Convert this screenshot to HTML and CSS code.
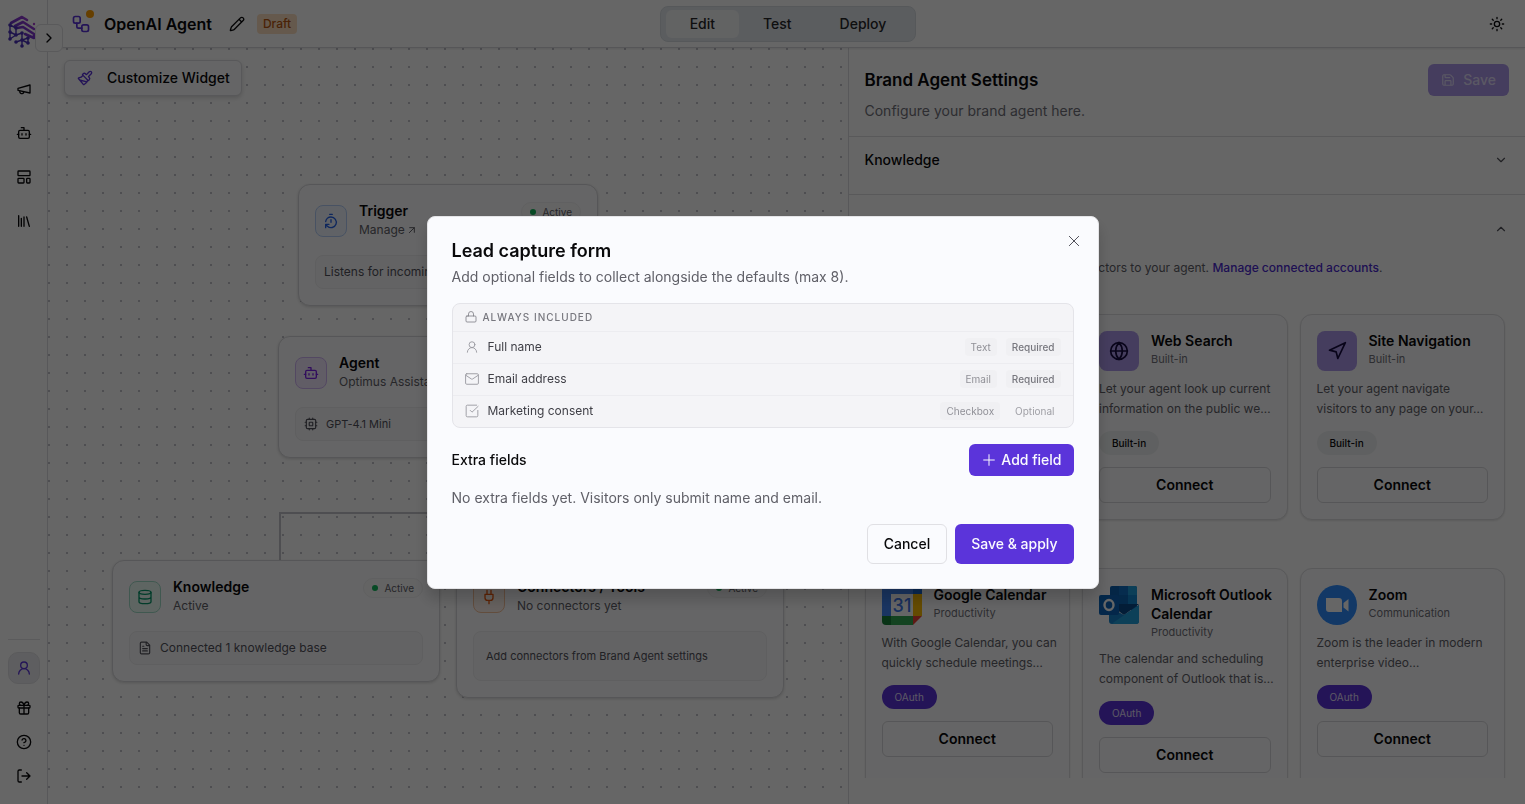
FILE: index.html
```html
<!DOCTYPE html>
<html lang="en">
<head>
<meta charset="utf-8">
<title>OpenAI Agent</title>
<link rel="stylesheet" href="styles.css">
</head>
<body>
<svg class="sprite" aria-hidden="true">
  <symbol id="i-megaphone" viewBox="0 0 24 24"><path d="m3 11 18-5v12L3 14v-3z"/><path d="M11.6 16.8a3 3 0 1 1-5.8-1.6"/></symbol>
  <symbol id="i-bot" viewBox="0 0 24 24"><path d="M12 8V4H8"/><rect width="16" height="12" x="4" y="8" rx="2"/><path d="M2 14h2M20 14h2M15 13v2M9 13v2"/></symbol>
  <symbol id="i-layout" viewBox="0 0 24 24"><rect width="18" height="7" x="3" y="3" rx="1"/><rect width="9" height="7" x="3" y="14" rx="1"/><rect width="5" height="7" x="16" y="14" rx="1"/></symbol>
  <symbol id="i-library" viewBox="0 0 24 24"><path d="m16 6 4 14M12 6v14M8 8v12M4 4v16"/></symbol>
  <symbol id="i-user" viewBox="0 0 24 24"><circle cx="12" cy="8" r="5"/><path d="M20 21a8 8 0 0 0-16 0"/></symbol>
  <symbol id="i-gift" viewBox="0 0 24 24"><rect x="3" y="8" width="18" height="4" rx="1"/><path d="M12 8v13M19 12v7a2 2 0 0 1-2 2H7a2 2 0 0 1-2-2v-7M7.5 8a2.5 2.5 0 0 1 0-5A4.8 8 0 0 1 12 8a4.8 8 0 0 1 4.500-5 2.500 2.500 0 0 1 0 5"/></symbol>
  <symbol id="i-help" viewBox="0 0 24 24"><circle cx="12" cy="12" r="10"/><path d="M9.090 9a3 3 0 0 1 5.830 1c0 2-3 3-3 3M12 17h.01"/></symbol>
  <symbol id="i-logout" viewBox="0 0 24 24"><path d="M8 21H5a2 2 0 0 1-2-2V5a2 2 0 0 1 2-2h3M16 17l5-5-5-5M21 12H9"/></symbol>
  <symbol id="i-right" viewBox="0 0 24 24"><path d="m9 18 6-6-6-6"/></symbol>
  <symbol id="i-down" viewBox="0 0 24 24"><path d="m6 9 6 6 6-6"/></symbol>
  <symbol id="i-up" viewBox="0 0 24 24"><path d="m18 15-6-6-6 6"/></symbol>
  <symbol id="i-workflow" viewBox="0 0 24 24"><rect width="8" height="8" x="3" y="3" rx="2"/><path d="M7 11v4a2 2 0 0 0 2 2h4"/><rect width="8" height="8" x="13" y="13" rx="2"/></symbol>
  <symbol id="i-pencil" viewBox="0 0 24 24"><path d="M21.174 6.812a1 1 0 0 0-3.986-3.987L3.842 16.174a2 2 0 0 0-.5.83l-1.321 4.352a.5.5 0 0 0 .623.622l4.353-1.320a2 2 0 0 0 .83-.497zM15 5l4 4"/></symbol>
  <symbol id="i-sun" viewBox="0 0 24 24"><circle cx="12" cy="12" r="4"/><path d="M12 2v2M12 20v2m-7.070-17.070 1.410 1.410m11.320 11.320 1.410 1.410M2 12h2M20 12h2M6.340 17.660l-1.410 1.410M19.070 4.930l-1.410 1.410"/></symbol>
  <symbol id="i-brush" viewBox="0 0 24 24"><path d="m14.622 17.897-10.680-2.913M18.376 2.622a1 1 0 1 1 3.002 3.002L17.360 9.643a.5.5 0 0 0 0 .707l.944.944a2.410 2.410 0 0 1 0 3.408l-.944.944a.5.5 0 0 1-.707 0L8.354 7.348a.5.5 0 0 1 0-.707l.944-.944a2.410 2.410 0 0 1 3.408 0l.944.944a.5.5 0 0 0 .707 0zM9 8c-1.804 2.710-3.970 3.460-6.583 3.948a.507.507 0 0 0-.302.819l7.320 8.883a1 1 0 0 0 1.185.204C12.735 20.405 16 16.792 16 15"/></symbol>
  <symbol id="i-save" viewBox="0 0 24 24"><path d="M15.200 3a2 2 0 0 1 1.400.6l3.800 3.800a2 2 0 0 1 .6 1.400V19a2 2 0 0 1-2 2H5a2 2 0 0 1-2-2V5a2 2 0 0 1 2-2zM17 21v-7a1 1 0 0 0-1-1H8a1 1 0 0 0-1 1v7M7 3v4a1 1 0 0 0 1 1h7"/></symbol>
  <symbol id="i-timer" viewBox="0 0 24 24"><path d="M10 2h4M12 14v-4M4 13a8 8 0 0 1 8-7 8 8 0 1 1-5.300 14L4 17.600M9 17H4v5"/></symbol>
  <symbol id="i-database" viewBox="0 0 24 24"><ellipse cx="12" cy="5" rx="9" ry="3"/><path d="M3 5v14a9 3 0 0 0 18 0V5M3 12a9 3 0 0 0 18 0"/></symbol>
  <symbol id="i-plug" viewBox="0 0 24 24"><path d="M12 22v-5M9 8V2M15 8V2M18 8v5a4 4 0 0 1-4 4h-4a4 4 0 0 1-4-4V8Z"/></symbol>
  <symbol id="i-cpu" viewBox="0 0 24 24"><rect width="16" height="16" x="4" y="4" rx="2"/><rect width="6" height="6" x="9" y="9" rx="1"/><path d="M15 2v2M15 20v2M2 15h2M2 9h2M20 15h2M20 9h2M9 2v2M9 20v2"/></symbol>
  <symbol id="i-file" viewBox="0 0 24 24"><path d="M15 2H6a2 2 0 0 0-2 2v16a2 2 0 0 0 2 2h12a2 2 0 0 0 2-2V7ZM14 2v4a2 2 0 0 0 2 2h4M10 9H8M16 13H8M16 17H8"/></symbol>
  <symbol id="i-upright" viewBox="0 0 24 24"><path d="M5 5h14v14M4 20 19 5"/></symbol>
  <symbol id="i-globe" viewBox="0 0 24 24"><circle cx="12" cy="12" r="10"/><path d="M12 2a14.500 14.500 0 0 0 0 20 14.500 14.500 0 0 0 0-20M2 12h20"/></symbol>
  <symbol id="i-nav" viewBox="0 0 24 24"><path d="m3 11 19-9-9 19-2-8-8-2z"/></symbol>
  <symbol id="i-lock" viewBox="0 0 24 24"><rect width="20" height="12" x="2" y="10" rx="2"/><path d="M7 10V6a5 5 0 0 1 10 0v4"/></symbol>
  <symbol id="i-mail" viewBox="0 0 24 24"><rect width="22" height="18" x="1" y="3" rx="2"/><path d="m22 6-8.970 6a1.940 1.940 0 0 1-2.060 0L2 6"/></symbol>
  <symbol id="i-check" viewBox="0 0 24 24"><path d="M22 11v9a2 2 0 0 1-2 2H4a2 2 0 0 1-2-2V4a2 2 0 0 1 2-2h16M9 11l3 3L22.500 4"/></symbol>
  <symbol id="i-plus" viewBox="0 0 24 24"><path d="M4 12h16M12 4v16"/></symbol>
  <symbol id="i-x" viewBox="0 0 24 24"><path d="M19 5 5 19M5 5l14 14"/></symbol>
</svg>

<div class="app">
  <aside class="sidebar">
    <svg class="logo" viewBox="0 0 28 34" aria-label="Home">
      <defs><linearGradient id="brand" x1="1" y1="0" x2="0" y2="1"><stop offset="0" stop-color="#a83fd2"/><stop offset=".5" stop-color="#7a35cf"/><stop offset="1" stop-color="#4a30ba"/></linearGradient></defs>
      <g fill="none" stroke="url(#brand)" stroke-width="2.600" stroke-linejoin="round" stroke-linecap="round">
        <path d="M3 8 14 2l5 3M7 11l8-4 11 7M9 13l6-1 11 7v4l-9-4"/>
      </g>
      <g stroke="#4a30ba" stroke-width="1.400" fill="none"><path d="M2 9v15M2 10l6 3M8 13v7l-6 4M8 20l6-2v7M2 17l6 3M8 27l6-2 6 3M14 31v-6l6-2v5"/></g>
      <g fill="#4a30ba"><circle cx="2" cy="10" r="1.800"/><circle cx="2" cy="17" r="1.800"/><circle cx="2" cy="24" r="1.800"/><circle cx="8" cy="13" r="1.800"/><circle cx="8" cy="20" r="1.800"/><circle cx="8" cy="27" r="1.800"/><circle cx="14" cy="18" r="1.800"/><circle cx="14" cy="25" r="1.800"/><circle cx="14" cy="31" r="1.800"/><circle cx="20" cy="23" r="1.800"/><circle cx="20" cy="28" r="1.800"/></g>
      <circle cx="26" cy="9" r="1.200" fill="#a83fd2"/>
    </svg>
    <button class="toggle" aria-label="Expand sidebar"><svg class="ic s16"><use href="#i-right"/></svg></button>
    <nav class="side-nav">
      <a href="#campaigns" aria-label="Campaigns"><svg class="ic s16"><use href="#i-megaphone"/></svg></a>
      <a href="#agents" aria-label="Agents"><svg class="ic s16"><use href="#i-bot"/></svg></a>
      <a href="#templates" aria-label="Templates"><svg class="ic s16"><use href="#i-layout"/></svg></a>
      <a href="#library" aria-label="Library"><svg class="ic s16"><use href="#i-library"/></svg></a>
    </nav>
    <div class="side-foot">
      <a class="account" href="#account" aria-label="Account"><svg class="ic s16"><use href="#i-user"/></svg></a>
      <a href="#rewards" aria-label="Rewards"><svg class="ic s16"><use href="#i-gift"/></svg></a>
      <a href="#help" aria-label="Help"><svg class="ic s16"><use href="#i-help"/></svg></a>
      <a href="#logout" aria-label="Log out"><svg class="ic s16"><use href="#i-logout"/></svg></a>
    </div>
  </aside>

  <div class="main">
    <header class="topbar">
      <div class="crumb">
        <span class="flow"><svg class="ic s20"><use href="#i-workflow"/></svg><i class="alert"></i></span>
        <h1>OpenAI Agent</h1>
        <button class="plain" aria-label="Rename"><svg class="ic s16"><use href="#i-pencil"/></svg></button>
        <span class="draft">Draft</span>
      </div>
      <div class="tabs">
        <button class="on">Edit</button><button>Test</button><button>Deploy</button>
      </div>
      <div class="top-end"><button class="plain" aria-label="Theme"><svg class="ic s16"><use href="#i-sun"/></svg></button></div>
    </header>

    <div class="work">
      <section class="canvas">
        <button class="customize"><svg class="ic s16"><use href="#i-brush"/></svg>Customize Widget</button>
        <div class="edge"></div>
        <article class="node trigger">
          <div class="node-head">
            <span class="tile blue"><svg class="ic s16"><use href="#i-timer"/></svg></span>
            <div class="node-name"><h2>Trigger</h2><p><a href="#manage">Manage <svg class="ic s8"><use href="#i-upright"/></svg></a></p></div>
            <span class="status">Active</span>
          </div>
          <div class="slot">Listens for incoming messages</div>
        </article>
        <article class="node agent">
          <div class="node-head">
            <span class="tile violet"><svg class="ic s16"><use href="#i-bot"/></svg></span>
            <div class="node-name"><h2>Agent</h2><p>Optimus Assistant</p></div>
            <span class="status">Active</span>
          </div>
          <div class="slot small"><svg class="ic s14"><use href="#i-cpu"/></svg>GPT-4.1 Mini</div>
        </article>
        <article class="node knowledge">
          <div class="node-head">
            <span class="tile green"><svg class="ic s16"><use href="#i-database"/></svg></span>
            <div class="node-name"><h2>Knowledge</h2><p>Active</p></div>
            <span class="status">Active</span>
          </div>
          <div class="slot"><svg class="ic s14"><use href="#i-file"/></svg>Connected 1 knowledge base</div>
        </article>
        <article class="node tools">
          <div class="node-head">
            <span class="tile orange"><svg class="ic s16"><use href="#i-plug"/></svg></span>
            <div class="node-name"><h2>Connectors / Tools</h2><p>No connectors yet</p></div>
            <span class="status">Active</span>
          </div>
          <div class="slot tall">Add connectors from Brand Agent settings</div>
        </article>
      </section>

      <aside class="panel">
        <div class="panel-head">
          <div><h2>Brand Agent Settings</h2><p>Configure your brand agent here.</p></div>
          <button class="save" disabled><svg class="ic s14"><use href="#i-save"/></svg>Save</button>
        </div>
        <button class="fold"><span>Knowledge</span><svg class="ic s14"><use href="#i-down"/></svg></button>
        <div class="connectors">
          <button class="fold open"><span>Connectors</span><svg class="ic s14"><use href="#i-up"/></svg></button>
          <p class="hint">Add tools, apps and other external connectors to your agent. <a href="#accounts">Manage connected accounts</a>.</p>
          <div class="cards">
            <article class="card">
              <div class="card-head"><span class="app-tile"><svg class="ic s20"><use href="#i-user"/></svg></span><div><h3>Lead Capture</h3><p>Built-in</p></div></div>
              <p class="desc">Let your agent collect<br>visitor details…</p><span class="tag">Built-in</span><button class="connect">Connect</button>
            </article>
            <article class="card">
              <div class="card-head"><span class="app-tile"><svg class="ic s20"><use href="#i-globe"/></svg></span><div><h3>Web Search</h3><p>Built-in</p></div></div>
              <p class="desc">Let your agent look up current<br>information on the public we…</p><span class="tag">Built-in</span><button class="connect">Connect</button>
            </article>
            <article class="card">
              <div class="card-head"><span class="app-tile"><svg class="ic s20"><use href="#i-nav"/></svg></span><div><h3>Site Navigation</h3><p>Built-in</p></div></div>
              <p class="desc">Let your agent navigate<br>visitors to any page on your…</p><span class="tag">Built-in</span><button class="connect">Connect</button>
            </article>
          </div>
          <div class="cards">
            <article class="card">
              <div class="card-head">
                <svg class="brand" viewBox="0 0 40 40"><path fill="#4285f4" d="M4 0h27v9H9v22H0V4a4 4 0 0 1 4-4z"/><path fill="#1967d2" d="M31 0h5a4 4 0 0 1 4 4v5h-9z"/><path fill="#fbbc04" d="M31 9h9v22h-9z"/><path fill="#34a853" d="M9 31h22v9H9z"/><path fill="#188038" d="M0 31h9v9H4a4 4 0 0 1-4-4z"/><path fill="#ea4335" d="M31 31h9l-9 9z"/><path fill="#fff" d="M9 9h22v22H9z"/><text x="20" y="27" text-anchor="middle" class="cal-num">31</text></svg>
                <div><h3>Google Calendar</h3><p>Productivity</p></div>
              </div>
              <p class="desc">With Google Calendar, you can<br>quickly schedule meetings…</p><span class="tag oauth">OAuth</span><button class="connect">Connect</button>
            </article>
            <article class="card">
              <div class="card-head">
                <svg class="brand" viewBox="0 0 40 40"><rect x="11" y="1" width="27" height="24" rx="2" fill="#0a5fb0"/><path fill="#0f6fc4" d="M20 1h9v9h-9z"/><path fill="#1f9fdc" d="M29 1h7a2 2 0 0 1 2 2v7h-9z"/><path fill="#0a64b4" d="M20 10h9v9h-9z"/><path fill="#0f86d0" d="M29 10h9v9h-9z"/><path fill="#084a8a" d="M10 19h30L25 30z"/><path fill="#1583cc" d="M10 22v14a3 3 0 0 0 3 3h24a3 3 0 0 0 3-3V20L25 30z"/><path fill="#22a0dc" d="M40 20 13 38.500l2 .5h22a3 3 0 0 0 3-3z"/><rect y="10" width="20" height="20" rx="2" fill="#0a63b8"/><ellipse cx="10" cy="20" rx="4.500" ry="5" fill="none" stroke="#fff" stroke-width="2.400"/></svg>
                <div><h3 class="wide">Microsoft Outlook<br>Calendar</h3><p>Productivity</p></div>
              </div>
              <p class="desc">The calendar and scheduling<br>component of Outlook that is…</p><span class="tag oauth">OAuth</span><button class="connect">Connect</button>
            </article>
            <article class="card">
              <div class="card-head">
                <svg class="brand" viewBox="0 0 40 40"><circle cx="20" cy="20" r="20" fill="#2d8cff"/><path fill="#fff" d="M9 13h13a3 3 0 0 1 3 3v11H12a3 3 0 0 1-3-3zM26.500 18l5-4v12.500l-5-4z"/></svg>
                <div><h3>Zoom</h3><p>Communication</p></div>
              </div>
              <p class="desc">Zoom is the leader in modern<br>enterprise video…</p><span class="tag oauth">OAuth</span><button class="connect">Connect</button>
            </article>
          </div>
        </div>
      </aside>
    </div>
  </div>
</div>

<div class="overlay">
  <div class="modal" role="dialog" aria-modal="true" aria-labelledby="dlg-title">
    <button class="close" aria-label="Close"><svg class="ic s16"><use href="#i-x"/></svg></button>
    <h2 id="dlg-title">Lead capture form</h2>
    <p class="sub">Add optional fields to collect alongside the defaults (max 8).</p>
    <div class="defaults">
      <div class="defaults-head"><svg class="ic s12"><use href="#i-lock"/></svg>ALWAYS INCLUDED</div>
      <div class="field"><svg class="ic s14"><use href="#i-user"/></svg><span class="label">Full name</span><span class="chip">Text</span><span class="chip req">Required</span></div>
      <div class="field"><svg class="ic s14"><use href="#i-mail"/></svg><span class="label">Email address</span><span class="chip">Email</span><span class="chip req">Required</span></div>
      <div class="field"><svg class="ic s14"><use href="#i-check"/></svg><span class="label">Marketing consent</span><span class="chip">Checkbox</span><span class="chip opt">Optional</span></div>
    </div>
    <div class="extra"><h3>Extra fields</h3><button class="primary add"><svg class="ic s16"><use href="#i-plus"/></svg>Add field</button></div>
    <p class="empty">No extra fields yet. Visitors only submit name and email.</p>
    <div class="actions"><button class="cancel">Cancel</button><button class="primary">Save &amp; apply</button></div>
  </div>
</div>
</body>
</html>
```
FILE: styles.css
```css
* { box-sizing: border-box; }
body, h1, h2, h3, p { margin: 0; }
body { font-family: Inter, "Open Sans", sans-serif; font-size: 14px; line-height: 20px; color: #09090b; background: #fff; }
button { font: inherit; font-weight: 500; color: inherit; background: none; border: 0; padding: 0; cursor: pointer; }
a { color: inherit; text-decoration: none; }
.sprite { position: absolute; width: 0; height: 0; }
.ic { fill: none; stroke: currentColor; stroke-width: 2; stroke-linecap: round; stroke-linejoin: round; flex: none; }
.s8 { width: 8px; height: 8px; stroke-width: 3; }
.s12 { width: 12px; height: 12px; }
.s14 { width: 14px; height: 14px; }
.s16 { width: 16px; height: 16px; }
.s20 { width: 20px; height: 20px; }

.app { display: flex; height: 100vh; overflow: hidden; }
.sidebar { position: relative; z-index: 2; flex: none; width: 48px; display: flex; flex-direction: column; padding: 15px 7px 12px 8px; border-right: 1px solid #dcdce0; }
.logo { width: 28px; height: 34px; }
.toggle { position: absolute; left: 35px; top: 24px; width: 28px; height: 28px; display: grid; place-items: center; border: 1px solid #e0e0e4; border-radius: 6px; background: #fff; }
.side-nav { display: flex; flex-direction: column; gap: 12px; padding-top: 24px; }
.side-nav a, .side-foot a { display: grid; place-items: center; height: 32px; }
.side-foot { margin-top: auto; display: flex; flex-direction: column; gap: 2px; padding-top: 12px; border-top: 1px solid #e4e4e7; }
.side-foot .account { margin-bottom: 6px; color: #5b34da; background: #ebebef; border: 1px solid #e2e2e6; border-radius: 10px; }

.main { flex: 1; min-width: 0; display: flex; flex-direction: column; }
.topbar { position: relative; z-index: 1; flex: none; height: 48px; display: grid; grid-template-columns: 1fr auto 1fr; align-items: center; padding: 0 20px 0 23px; border-bottom: 1px solid #d8d8dc; box-shadow: 0 1px 2px #00000018; background: #fff; }
.crumb { display: flex; align-items: center; }
.flow { position: relative; display: flex; color: #5b34da; }
.alert { position: absolute; right: -3px; top: -4px; width: 8px; height: 8px; border-radius: 50%; background: #ff9d00; }
.topbar h1 { font-size: 16px; line-height: 24px; font-weight: 600; margin-left: 13px; }
.plain { display: grid; place-items: center; }
.crumb .plain { margin: 0 12px 0 17px; }
.draft { padding: 0 6px; border-radius: 4px; font-size: 12px; font-weight: 500; color: #b8560f; background: #fddfc0; }
.tabs { display: flex; padding: 3px 5px; border: 1px solid #d8dde2; border-radius: 8px; background: #e4e9ee; }
.tabs button { height: 28px; padding: 0 24px; border-radius: 6px; color: #27272a; }
.tabs .on { background: #f6f7f8; }
.top-end { justify-self: end; }

.work { flex: 1; min-height: 0; display: flex; }
.canvas { position: relative; flex: 13 1 0; min-width: 0; overflow: hidden; background: radial-gradient(circle, #c4c4cb 1px, transparent 1px) -8px -8px / 18px 18px; }
.customize { position: absolute; left: 16px; top: 12px; height: 36px; display: flex; align-items: center; gap: 14px; padding: 0 11px 0 12px; border: 1px solid #dcdce0; border-radius: 6px; background: #fdfdfe; box-shadow: 0 2px 4px #00000028; }
.customize .ic { color: #5b34da; }
.edge { position: absolute; left: 231px; top: 464px; width: 342px; height: 50px; border: solid #c4c4ca; border-width: 2px 2px 0; }
.node { position: absolute; padding: 20px 16px 16px; border: 1px solid #d8d8dc; border-radius: 12px; background: #fdfdfe; box-shadow: 0 1px 3px #00000028; }
.trigger { left: 250px; top: 136px; width: 300px; }
.agent { left: 230px; top: 288px; width: 340px; }
.knowledge { left: 64px; top: 512px; width: 328px; }
.tools { left: 408px; top: 512px; width: 328px; }
.node-head { display: flex; align-items: flex-start; gap: 12px; margin-bottom: 16px; }
.tile { width: 32px; height: 32px; display: grid; place-items: center; border: 1px solid; border-radius: 8px; }
.blue { color: #2563eb; background: #eff6ff; border-color: #b3cdf8; }
.violet { color: #7c22e8; background: #f3e8ff; border-color: #d0b3f5; }
.green { color: #059669; background: #ecfdf5; border-color: #a0dcc8; }
.orange { color: #ea580c; background: #fff3ec; border-color: #f5c09a; }
.node-name { flex: 1; margin-top: -4px; }
.node-name h2 { font-size: 14px; line-height: 20px; font-weight: 600; }
.node-name p { font-size: 12px; line-height: 18px; color: #606068; }
.status { display: flex; align-items: center; gap: 6px; height: 20px; margin-top: -3px; padding: 0 8px; border: 1px solid #f0f0f2; border-radius: 10px; font-size: 10px; color: #606068; background: #fafafb; }
.status::before { content: ""; width: 6px; height: 6px; border-radius: 50%; background: #12b85c; }
.slot { display: flex; align-items: center; gap: 8px; min-height: 34px; padding: 0 8px; border: 1px solid #ededf0; border-radius: 8px; background: #f8f8fa; font-size: 12px; color: #52525b; }
.slot.small { font-size: 11px; }
.slot.tall { min-height: 50px; padding: 0 12px; font-size: 11px; }

.panel { flex: 11 1 0; min-width: 0; display: flex; flex-direction: column; padding-bottom: 26px; border-left: 1px solid #dcdce0; background: #fff; }
.panel-head { flex: none; display: flex; justify-content: space-between; align-items: flex-start; padding: 16px 16px 15px; border-bottom: 1px solid #dedee2; }
.panel-head h2 { font-size: 17px; line-height: 32px; font-weight: 600; }
.panel-head p { margin-top: 5px; color: #71717a; }
.save { display: flex; align-items: center; gap: 8px; height: 32px; padding: 0 13px; border-radius: 6px; color: #e2dcfa; background: #ac98ea; }
.fold { flex: none; display: flex; align-items: flex-start; justify-content: space-between; width: 100%; height: 58px; padding: 13px 17px 0 16px; border-bottom: 1px solid #dedee2; }
.fold .ic { margin-top: 3px; color: #52525b; }
.fold.open { border: 0; padding-top: 24px; }
.connectors { flex: 1; min-height: 0; overflow: hidden; }
.hint { padding: 5px 16px 0; font-size: 12px; color: #606068; }
.hint a { font-weight: 500; color: #4c2ad0; }
.cards { display: grid; grid-template-columns: repeat(3, minmax(0, 1fr)); gap: 12px; padding: 0 20px 0 16px; margin-top: 36px; }
.cards + .cards { margin-top: 48px; }
.card { display: flex; flex-direction: column; align-items: flex-start; min-width: 0; padding: 16px; border: 1px solid #dedee2; border-radius: 12px; background: #fdfdfe; box-shadow: 0 1px 2px #0000001c; }
.card-head { display: flex; gap: 12px; margin-bottom: 8px; }
.brand, .app-tile { flex: none; width: 40px; height: 40px; }
.app-tile { display: grid; place-items: center; border-radius: 8px; background: #ac98ea; color: #150a40; }
.cal-num { font-size: 18px; font-weight: 500; fill: #4076e8; }
.card h3 { font-size: 14px; line-height: 19px; font-weight: 600; }
.card .wide { white-space: nowrap; }
.card-head p { font-size: 11px; line-height: 18px; color: #71717a; }
.desc { font-size: 12px; white-space: nowrap; color: #606068; }
.tag { display: flex; align-items: center; height: 24px; margin: 12px 0; padding: 0 13px; border-radius: 12px; font-size: 10px; font-weight: 500; background: #eef1f2; }
.oauth { font-weight: 400; color: #e4defa; background: #5b34da; }
.connect { width: 100%; height: 36px; border: 1px solid #d8d8dc; border-radius: 6px; font-weight: 600; background: #fdfdfe; }

.overlay { position: fixed; inset: 0; z-index: 10; display: grid; place-items: center; background: rgba(0, 0, 0, .6); }
.modal { position: relative; width: min(672px, 94vw); padding: 24px; border: 1px solid #e4e4e7; border-radius: 8px; background: #fafbfe; box-shadow: 0 10px 15px #00000030; }
.modal .ic { stroke-width: 1.5; }
.modal h2 { font-size: 18px; font-weight: 600; margin-bottom: 6px; }
.sub, .empty { color: #606068; }
.close { position: absolute; right: 16px; top: 16px; color: #52525b; }
.close .ic { display: block; }
.defaults { margin: 16px 0; border: 1px solid #e4e4e9; border-radius: 8px; background: #f4f4f7; color: #77777e; }
.defaults-head { display: flex; align-items: center; gap: 6px; height: 27px; padding: 0 12px; font-size: 10px; font-weight: 500; letter-spacing: 1px; }
.field { display: flex; align-items: center; height: 32px; padding: 0 12px; border-top: 1px solid #ececf0; font-size: 12px; }
.field > .ic { color: #96969d; }
.label { flex: 1; margin-left: 9px; color: #3f3f46; }
.chip { padding: 0 6px; margin-left: 9px; border-radius: 4px; font-size: 10px; line-height: 18px; color: #909097; background: #f0f0f3; }
.req { font-weight: 500; color: #77777e; }
.opt { color: #a0a0a6; background: none; }
.extra { display: flex; align-items: center; justify-content: space-between; margin-bottom: 12px; }
.extra h3 { font-size: 14px; font-weight: 500; }
.actions { display: flex; justify-content: flex-end; gap: 8px; margin-top: 16px; }
.actions button { height: 40px; padding: 0 16px; border-radius: 6px; }
.primary { color: #fafafe; background: #5b34da; }
.add { display: flex; align-items: center; gap: 4px; height: 32px; padding: 0 12px; border-radius: 6px; }
.actions .cancel { border: 1px solid #e0e0e4; }
```
